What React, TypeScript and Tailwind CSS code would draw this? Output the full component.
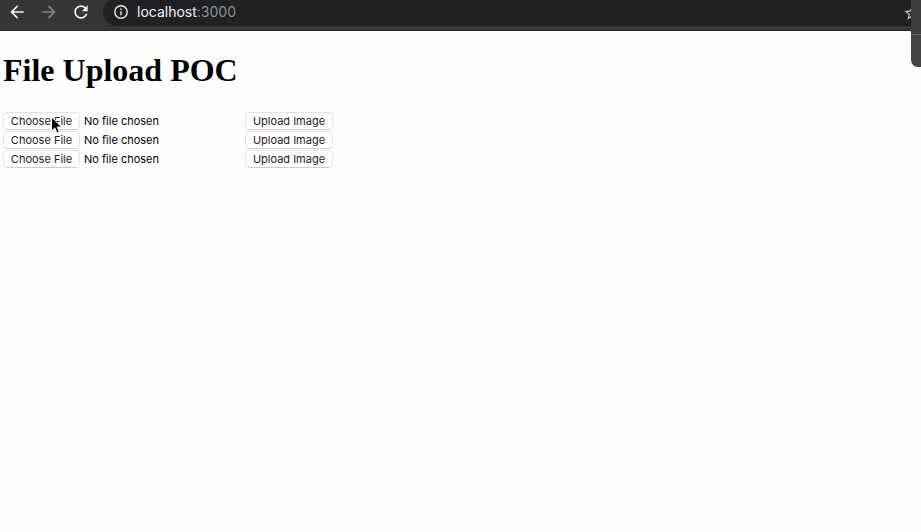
const BUTTON =
  "flex h-[18px] items-center justify-center rounded-[5px] border border-[#e2e2e2] border-b-[#cdcdcd] bg-white pt-px whitespace-nowrap text-[#222]";

function Toolbar() {
  return (
    <header className="flex h-[31px] items-start overflow-hidden border-b border-[#28292c] bg-[#35363a]">
      <div className="flex h-6 w-[103px] shrink-0 items-center gap-3 pl-[7px]">
        <svg className="size-5 shrink-0" viewBox="0 0 24 24" fill="#f1f3f4">
          <path d="M20 11H7.83l5.59-5.59L12 4l-8 8 8 8 1.41-1.41L7.83 13H20v-2z" />
        </svg>
        <svg className="size-5 shrink-0" viewBox="0 0 24 24" fill="#818286">
          <path d="M12 4l-1.41 1.41L16.17 11H4v2h12.17l-5.58 5.59L12 20l8-8z" />
        </svg>
        <svg className="size-5 shrink-0" viewBox="0 0 24 24" fill="#f1f3f4">
          <path d="M17.65 6.35C16.2 4.9 14.21 4 12 4c-4.42 0-7.99 3.58-7.99 8s3.57 8 7.99 8c3.73 0 6.84-2.55 7.73-6h-2.08c-.82 2.33-3.04 4-5.65 4-3.31 0-6-2.69-6-6s2.69-6 6-6c1.66 0 3.14.69 4.22 1.78L13 11h7V4l-2.35 2.35z" />
        </svg>
      </div>
      <div className="-mt-[2px] flex h-7 flex-1 items-center rounded-l-full bg-[#202124] pl-[10px]">
        <svg className="size-4 shrink-0" viewBox="0 0 16 16" fill="none" stroke="#e8eaed" strokeWidth="1.4">
          <circle cx="8" cy="8" r="6.2" />
          <path d="M8 7.2v4M8 4.5v1.5" />
        </svg>
        <span className="ml-2 font-[Inter,sans-serif] text-[14px] leading-5 text-[#8e9195]">
          <span className="text-[#f1f3f4]">localhost</span>:3000
        </span>
        <svg className="ml-auto mt-[2px] size-[18px] shrink-0" viewBox="0 0 24 24" fill="#c4c7ca">
          <path d="M22 9.24l-7.19-.62L12 2 9.19 8.63 2 9.24l5.46 4.73L5.82 21 12 17.27 18.18 21l-1.63-7.03L22 9.24zM12 15.4l-3.76 2.27 1-4.28-3.32-2.88 4.38-.38L12 6.1l1.71 4.04 4.38.38-3.32 2.88 1 4.28L12 15.4z" />
        </svg>
      </div>
    </header>
  );
}

function UploadRow() {
  return (
    <div className="flex h-[19px] items-start">
      <button className={`${BUTTON} w-[77px]`}>Choose File</button>
      <span className="ml-1 w-[161px] pt-px leading-[17px] whitespace-nowrap text-black">No file chosen</span>
      <button className={`${BUTTON} w-[88px]`}>Upload Image</button>
    </div>
  );
}

export default function App() {
  return (
    <div className="relative h-[532px] w-[921px] overflow-hidden bg-[#fefefe]">
      <Toolbar />
      <main className="pt-[19px] pl-[3px]">
        <h1 className="font-['Liberation_Serif',serif] text-[32px] leading-10 font-bold whitespace-nowrap text-black">
          File Upload POC
        </h1>
        <div className="mt-[22px] font-[Inter,sans-serif] text-[11px] tracking-normal">
          <UploadRow />
          <UploadRow />
          <UploadRow />
        </div>
      </main>
      <div className="absolute top-0 right-0 h-[67px] w-[10px] rounded-bl-[7px] bg-[#444445]">
        <div className="h-[35px] border-b border-[#68686a] bg-[#3c3c3d]" />
      </div>
      <svg className="absolute top-[116px] left-[50px] h-[19px] w-[13px]" viewBox="0 0 13 19">
        <path d="M1.5 1v14l3.3-3.1 2.2 5 2.3-1-2.1-4.8h4.5z" fill="#000" stroke="#fff" strokeWidth="1" />
      </svg>
    </div>
  );
}
